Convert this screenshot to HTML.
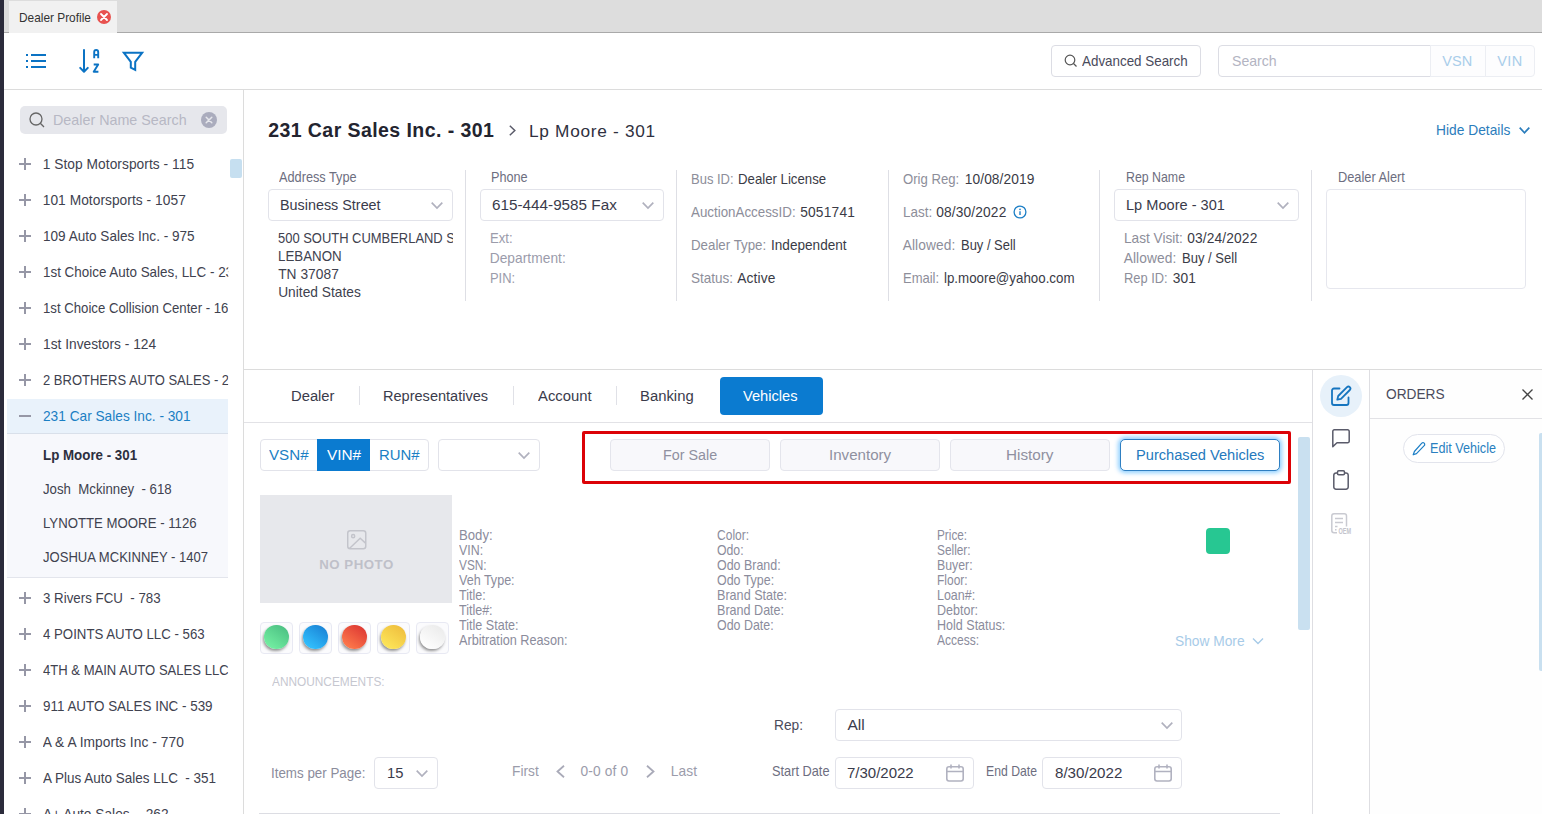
<!DOCTYPE html>
<html><head><meta charset="utf-8"><title>Dealer Profile</title><style>
html,body{margin:0;padding:0;}
body{width:1542px;height:814px;overflow:hidden;position:relative;background:#fff;font-family:"Liberation Sans",sans-serif;}
.t{position:absolute;white-space:pre;line-height:20px;height:20px;transform-origin:0 0;}
.b{position:absolute;box-sizing:border-box;}
svg{position:absolute;overflow:visible;}
</style></head><body>
<div class="b" style="left:0px;top:0px;width:1542px;height:33px;background:#dddddd;border-bottom:1px solid #a9a9a9;"></div>
<div class="b" style="left:9px;top:1px;width:108px;height:32px;background:#f1f1f1;"></div>
<span class="t " style="left:18.70px;top:8.00px;font-size:12.75px;color:#333;transform:scaleX(0.9308);">Dealer Profile</span>
<svg style="left:97px;top:10px" width="14" height="14" viewBox="0 0 14 14"><circle cx="7" cy="7" r="7" fill="#e8524f"/><path d="M4 4L10 10M10 4L4 10" stroke="#fff" stroke-width="1.800" stroke-linecap="round"/></svg>
<div class="b" style="left:0px;top:0px;width:4px;height:814px;background:#2b2b3b;"></div>
<div class="b" style="left:4px;top:89px;width:1538px;height:1px;background:#dcdcdc;"></div>
<svg style="left:25px;top:53px" width="22" height="16" viewBox="0 0 22 16"><g stroke="#0b73c4" stroke-width="2" fill="none"><path d="M1 2h2M6 2h15M1 8h2M6 8h15M1 14h2M6 14h15"/></g></svg>
<svg style="left:78px;top:48px" width="24" height="26" viewBox="0 0 24 26"><g stroke="#0b73c4" stroke-width="2" fill="none" stroke-linecap="round" stroke-linejoin="round"><path d="M6 2v21.500M2.200 19.900L6 23.800 9.800 19.900"/></g><g stroke="#0b73c4" stroke-width="1.900" fill="none" stroke-linejoin="round"><path d="M16.200 10.300V4a2 2 0 0 1 4 0V10.300M16.200 6.900h4"/><path d="M15.700 16.500h4.500l-4.500 7.300h4.700"/></g></svg>
<svg style="left:121px;top:51px" width="24" height="22" viewBox="0 0 24 22"><path d="M2.800 1.700h18.400l-7 9.200v8l-4.400-2.200v-5.800z" stroke="#0b73c4" stroke-width="2" fill="none" stroke-linejoin="miter"/></svg>
<div class="b" style="left:1051px;top:45px;width:150px;height:32px;border:1px solid #dcdde4;border-radius:4px;background:#fff;"></div>
<svg style="left:1064px;top:54px" width="14" height="14" viewBox="0 0 14 14"><circle cx="6" cy="6" r="4.800" stroke="#555" stroke-width="1.2" fill="none"/><path d="M9.500 9.500L12.500 12.500" stroke="#555" stroke-width="1.2"/></svg>
<span class="t " style="left:1081.90px;top:52.00px;font-size:13.75px;color:#4a4b5c;transform:scaleX(0.9738);">Advanced Search</span>
<div class="b" style="left:1218px;top:45px;width:213px;height:32px;border:1px solid #dcdde4;border-radius:4px 0 0 4px;background:#fff;"></div>
<span class="t " style="left:1231.60px;top:51.00px;font-size:14.5px;color:#b3b4c2;transform:scaleX(0.9730);">Search</span>
<div class="b" style="left:1430px;top:45px;width:56px;height:32px;border:1px solid #eceef3;background:#fdfdfe;"></div>
<div class="b" style="left:1485px;top:45px;width:50px;height:32px;border:1px solid #eceef3;border-radius:0 4px 4px 0;background:#fdfdfe;"></div>
<span class="t " style="left:1442.20px;top:51.00px;font-size:14.5px;color:#a9cdea;letter-spacing:0.143px;">VSN</span>
<span class="t " style="left:1497.20px;top:51.00px;font-size:14.5px;color:#a9cdea;letter-spacing:0.464px;">VIN</span>
<div class="b" style="left:243px;top:90px;width:1px;height:724px;background:#dcdcdc;"></div>
<div class="b" style="left:20px;top:106px;width:207px;height:28px;background:#e6e7ec;border-radius:5px;"></div>
<svg style="left:29px;top:112px" width="16" height="16" viewBox="0 0 16 16"><circle cx="7" cy="7" r="6" stroke="#666" stroke-width="1.300" fill="none"/><path d="M11.300 11.300L15 15" stroke="#666" stroke-width="1.300"/></svg>
<span class="t " style="left:52.70px;top:110.00px;font-size:14.5px;color:#b7b8c4;transform:scaleX(0.9868);">Dealer Name Search</span>
<svg style="left:201px;top:112px" width="16" height="16" viewBox="0 0 16 16"><circle cx="8" cy="8" r="8" fill="#aaacbd"/><path d="M5.200 5.200L10.800 10.800M10.800 5.200L5.200 10.800" stroke="#e6e7ec" stroke-width="1.500" stroke-linecap="round"/></svg>
<div class="b" style="left:230px;top:159px;width:12px;height:19px;background:#c6dff0;border-radius:2px;"></div>
<svg style="left:25px;top:164px" width="1" height="1"><path d="M-6 0H6M0 -6V6" stroke="#9697a6" stroke-width="2" fill="none"/></svg>
<span class="t " style="left:42.70px;top:155.00px;font-size:13.75px;color:#40424f;letter-spacing:0.048px;">1 Stop Motorsports - 115</span>
<svg style="left:25px;top:200px" width="1" height="1"><path d="M-6 0H6M0 -6V6" stroke="#9697a6" stroke-width="2" fill="none"/></svg>
<span class="t " style="left:42.70px;top:191.00px;font-size:13.75px;color:#40424f;letter-spacing:0.045px;">101 Motorsports - 1057</span>
<svg style="left:25px;top:236px" width="1" height="1"><path d="M-6 0H6M0 -6V6" stroke="#9697a6" stroke-width="2" fill="none"/></svg>
<span class="t " style="left:42.70px;top:227.00px;font-size:13.75px;color:#40424f;transform:scaleX(0.9867);">109 Auto Sales Inc. - 975</span>
<svg style="left:25px;top:272px" width="1" height="1"><path d="M-6 0H6M0 -6V6" stroke="#9697a6" stroke-width="2" fill="none"/></svg>
<span class="t " style="left:42.70px;top:263.00px;font-size:13.75px;color:#40424f;transform:scaleX(0.9751);overflow:hidden;width:190.03px;">1st Choice Auto Sales, LLC - 2345</span>
<svg style="left:25px;top:308px" width="1" height="1"><path d="M-6 0H6M0 -6V6" stroke="#9697a6" stroke-width="2" fill="none"/></svg>
<span class="t " style="left:42.70px;top:299.00px;font-size:13.75px;color:#40424f;transform:scaleX(0.9590);overflow:hidden;width:193.22px;">1st Choice Collision Center - 1678</span>
<svg style="left:25px;top:344px" width="1" height="1"><path d="M-6 0H6M0 -6V6" stroke="#9697a6" stroke-width="2" fill="none"/></svg>
<span class="t " style="left:42.70px;top:335.00px;font-size:13.75px;color:#40424f;transform:scaleX(0.9999);">1st Investors - 124</span>
<svg style="left:25px;top:380px" width="1" height="1"><path d="M-6 0H6M0 -6V6" stroke="#9697a6" stroke-width="2" fill="none"/></svg>
<span class="t " style="left:42.70px;top:371.00px;font-size:13.75px;color:#40424f;transform:scaleX(0.9452);overflow:hidden;width:196.05px;">2 BROTHERS AUTO SALES - 2222</span>
<div class="b" style="left:7px;top:399px;width:221px;height:35px;background:#e9f2fb;border-bottom:1px solid #d9e0ea;"></div>
<svg style="left:25px;top:416px" width="1" height="1"><path d="M-6 0H6" stroke="#9697a6" stroke-width="2" fill="none"/></svg>
<span class="t " style="left:42.70px;top:407.00px;font-size:13.75px;color:#1b7fc4;transform:scaleX(0.9954);">231 Car Sales Inc. - 301</span>
<div class="b" style="left:7px;top:434px;width:221px;height:144px;background:#f7f8fc;border-bottom:1px solid #e3e5ec;"></div>
<span class="t " style="left:42.70px;top:446.00px;font-size:13.75px;color:#2d2f3e;font-weight:bold;transform:scaleX(0.9698);">Lp Moore - 301</span>
<span class="t " style="left:42.70px;top:480.00px;font-size:13.75px;color:#40424f;transform:scaleX(0.9616);">Josh  Mckinney  - 618</span>
<span class="t " style="left:42.70px;top:514.00px;font-size:13.75px;color:#40424f;transform:scaleX(0.9603);">LYNOTTE MOORE - 1126</span>
<span class="t " style="left:42.70px;top:548.00px;font-size:13.75px;color:#40424f;transform:scaleX(0.9490);">JOSHUA MCKINNEY - 1407</span>
<svg style="left:25px;top:598px" width="1" height="1"><path d="M-6 0H6M0 -6V6" stroke="#9697a6" stroke-width="2" fill="none"/></svg>
<span class="t " style="left:42.70px;top:589.00px;font-size:13.75px;color:#40424f;transform:scaleX(0.9680);overflow:hidden;width:191.43px;">3 Rivers FCU  - 783</span>
<svg style="left:25px;top:634px" width="1" height="1"><path d="M-6 0H6M0 -6V6" stroke="#9697a6" stroke-width="2" fill="none"/></svg>
<span class="t " style="left:42.70px;top:625.00px;font-size:13.75px;color:#40424f;transform:scaleX(0.9627);overflow:hidden;width:192.49px;">4 POINTS AUTO LLC - 563</span>
<svg style="left:25px;top:670px" width="1" height="1"><path d="M-6 0H6M0 -6V6" stroke="#9697a6" stroke-width="2" fill="none"/></svg>
<span class="t " style="left:42.70px;top:661.00px;font-size:13.75px;color:#40424f;transform:scaleX(0.9500);overflow:hidden;width:195.05px;">4TH &amp; MAIN AUTO SALES LLC</span>
<svg style="left:25px;top:706px" width="1" height="1"><path d="M-6 0H6M0 -6V6" stroke="#9697a6" stroke-width="2" fill="none"/></svg>
<span class="t " style="left:42.70px;top:697.00px;font-size:13.75px;color:#40424f;transform:scaleX(0.9761);overflow:hidden;width:189.83px;">911 AUTO SALES INC - 539</span>
<svg style="left:25px;top:742px" width="1" height="1"><path d="M-6 0H6M0 -6V6" stroke="#9697a6" stroke-width="2" fill="none"/></svg>
<span class="t " style="left:42.70px;top:733.00px;font-size:13.75px;color:#40424f;letter-spacing:0.056px;overflow:hidden;width:185.30px;">A &amp; A Imports Inc - 770</span>
<svg style="left:25px;top:778px" width="1" height="1"><path d="M-6 0H6M0 -6V6" stroke="#9697a6" stroke-width="2" fill="none"/></svg>
<span class="t " style="left:42.70px;top:769.00px;font-size:13.75px;color:#40424f;transform:scaleX(0.9803);overflow:hidden;width:189.02px;">A Plus Auto Sales LLC  - 351</span>
<svg style="left:25px;top:814px" width="1" height="1"><path d="M-6 0H6M0 -6V6" stroke="#9697a6" stroke-width="2" fill="none"/></svg>
<span class="t " style="left:42.70px;top:805.00px;font-size:13.75px;color:#40424f;transform:scaleX(0.9988);overflow:hidden;width:185.52px;">A+ Auto Sales  - 262</span>
<span class="t " style="left:268.20px;top:120.00px;font-size:19.5px;color:#23242f;font-weight:bold;letter-spacing:0.430px;">231 Car Sales Inc. - 301</span>
<svg style="left:508.500px;top:124.500px" width="7" height="11" viewBox="0 0 7 11"><path d="M0.800 0.800L5.800 5.500 0.800 10.200" stroke="#5a5b6a" stroke-width="1.500" fill="none"/></svg>
<span class="t " style="left:529.00px;top:121.00px;font-size:17.25px;color:#2f3040;letter-spacing:0.701px;">Lp Moore - 301</span>
<span class="t " style="left:1436.00px;top:121.00px;font-size:13.75px;color:#2b7dbc;letter-spacing:0.025px;">Hide Details</span>
<svg style="left:1518.500px;top:126.500px" width="11" height="7" viewBox="0 0 11 7"><path d="M0.700 0.700L5.500 5.800 10.300 0.700" stroke="#2b7dbc" stroke-width="1.700" fill="none"/></svg>
<span class="t " style="left:279.20px;top:168.00px;font-size:13.75px;color:#6d6e80;transform:scaleX(0.9258);">Address Type</span>
<div class="b" style="left:268px;top:189px;width:185px;height:32px;border:1px solid #e2e3ea;border-radius:4px;background:#fff;"></div>
<span class="t " style="left:280.20px;top:195.00px;font-size:15.5px;color:#3a3b4b;transform:scaleX(0.9267);">Business Street</span>
<svg style="left:431px;top:201.5px" width="12" height="7" viewBox="0 0 12 7"><path d="M0.700 0.700L6 6 11.300 0.700" stroke="#b0b1be" stroke-width="1.700" fill="none"/></svg>
<span class="t " style="left:278.20px;top:229.00px;font-size:13.75px;color:#40424f;transform:scaleX(0.9414);overflow:hidden;width:185.67px;">500 SOUTH CUMBERLAND ST</span>
<span class="t " style="left:278.20px;top:247.00px;font-size:13.75px;color:#40424f;transform:scaleX(0.9678);">LEBANON</span>
<span class="t " style="left:278.20px;top:265.00px;font-size:13.75px;color:#40424f;letter-spacing:0.031px;">TN 37087</span>
<span class="t " style="left:278.20px;top:283.00px;font-size:13.75px;color:#40424f;letter-spacing:0.004px;">United States</span>
<div class="b" style="left:465px;top:170px;width:1px;height:131px;background:#dedfe5;"></div>
<div class="b" style="left:676px;top:170px;width:1px;height:131px;background:#dedfe5;"></div>
<div class="b" style="left:888px;top:170px;width:1px;height:131px;background:#dedfe5;"></div>
<div class="b" style="left:1099px;top:170px;width:1px;height:131px;background:#dedfe5;"></div>
<div class="b" style="left:1311px;top:170px;width:1px;height:131px;background:#dedfe5;"></div>
<span class="t " style="left:491.20px;top:168.00px;font-size:13.75px;color:#6d6e80;transform:scaleX(0.9205);">Phone</span>
<div class="b" style="left:480px;top:189px;width:184px;height:32px;border:1px solid #e2e3ea;border-radius:4px;background:#fff;"></div>
<span class="t " style="left:492.20px;top:195.00px;font-size:15.5px;color:#3a3b4b;transform:scaleX(0.9852);">615-444-9585 Fax</span>
<svg style="left:642px;top:201.5px" width="12" height="7" viewBox="0 0 12 7"><path d="M0.700 0.700L6 6 11.300 0.700" stroke="#b0b1be" stroke-width="1.700" fill="none"/></svg>
<span class="t " style="left:489.70px;top:229.00px;font-size:13.75px;color:#9b9cab;transform:scaleX(0.9541);">Ext:</span>
<span class="t " style="left:489.70px;top:249.00px;font-size:13.75px;color:#9b9cab;letter-spacing:0.044px;">Department:</span>
<span class="t " style="left:489.70px;top:269.00px;font-size:13.75px;color:#9b9cab;transform:scaleX(0.9386);">PIN:</span>
<span class="t " style="left:690.70px;top:170.00px;font-size:13.75px;color:#8d8e9a;transform:scaleX(0.9449);">Bus ID:</span>
<span class="t " style="left:738.20px;top:170.00px;font-size:13.75px;color:#3a3b46;transform:scaleX(0.9605);">Dealer License</span>
<span class="t " style="left:690.70px;top:203.00px;font-size:13.75px;color:#8d8e9a;transform:scaleX(0.9707);">AuctionAccessID:</span>
<span class="t " style="left:800.20px;top:203.00px;font-size:13.75px;color:#3a3b46;letter-spacing:0.195px;">5051741</span>
<span class="t " style="left:690.70px;top:236.00px;font-size:13.75px;color:#8d8e9a;transform:scaleX(0.9677);">Dealer Type:</span>
<span class="t " style="left:771.20px;top:236.00px;font-size:13.75px;color:#3a3b46;transform:scaleX(0.9887);">Independent</span>
<span class="t " style="left:690.70px;top:269.00px;font-size:13.75px;color:#8d8e9a;transform:scaleX(0.9836);">Status:</span>
<span class="t " style="left:737.20px;top:269.00px;font-size:13.75px;color:#3a3b46;letter-spacing:0.131px;">Active</span>
<span class="t " style="left:902.70px;top:170.00px;font-size:13.75px;color:#8d8e9a;transform:scaleX(0.9551);">Orig Reg:</span>
<span class="t " style="left:964.80px;top:170.00px;font-size:13.75px;color:#3a3b46;letter-spacing:0.076px;">10/08/2019</span>
<span class="t " style="left:902.70px;top:203.00px;font-size:13.75px;color:#8d8e9a;transform:scaleX(0.9795);">Last:</span>
<span class="t " style="left:936.20px;top:203.00px;font-size:13.75px;color:#3a3b46;letter-spacing:0.142px;">08/30/2022</span>
<svg style="left:1013px;top:205px" width="14" height="14" viewBox="0 0 14 14"><circle cx="7" cy="7" r="5.900" stroke="#1d7fc6" stroke-width="1.300" fill="none"/><path d="M7 6.300V10" stroke="#1d7fc6" stroke-width="1.400"/><circle cx="7" cy="4.300" r="0.850" fill="#1d7fc6"/></svg>
<span class="t " style="left:902.70px;top:236.00px;font-size:13.75px;color:#8d8e9a;letter-spacing:0.090px;">Allowed:</span>
<span class="t " style="left:960.60px;top:236.00px;font-size:13.75px;color:#3a3b46;transform:scaleX(0.9418);">Buy / Sell</span>
<span class="t " style="left:902.70px;top:269.00px;font-size:13.75px;color:#8d8e9a;transform:scaleX(0.9450);">Email:</span>
<span class="t " style="left:944.20px;top:269.00px;font-size:13.75px;color:#3a3b46;transform:scaleX(0.9687);">lp.moore@yahoo.com</span>
<span class="t " style="left:1125.70px;top:168.00px;font-size:13.75px;color:#6d6e80;transform:scaleX(0.8977);">Rep Name</span>
<div class="b" style="left:1114px;top:189px;width:185px;height:32px;border:1px solid #e2e3ea;border-radius:4px;background:#fff;"></div>
<span class="t " style="left:1126.20px;top:195.00px;font-size:15.5px;color:#3a3b4b;transform:scaleX(0.9409);">Lp Moore - 301</span>
<svg style="left:1277px;top:201.5px" width="12" height="7" viewBox="0 0 12 7"><path d="M0.700 0.700L6 6 11.300 0.700" stroke="#b0b1be" stroke-width="1.700" fill="none"/></svg>
<span class="t " style="left:1123.70px;top:229.00px;font-size:13.75px;color:#8d8e9a;transform:scaleX(0.9923);">Last Visit:</span>
<span class="t " style="left:1187.20px;top:229.00px;font-size:13.75px;color:#3a3b46;letter-spacing:0.142px;">03/24/2022</span>
<span class="t " style="left:1123.70px;top:249.00px;font-size:13.75px;color:#8d8e9a;letter-spacing:0.090px;">Allowed:</span>
<span class="t " style="left:1181.80px;top:249.00px;font-size:13.75px;color:#3a3b46;transform:scaleX(0.9487);">Buy / Sell</span>
<span class="t " style="left:1123.70px;top:269.00px;font-size:13.75px;color:#8d8e9a;transform:scaleX(0.9353);">Rep ID:</span>
<span class="t " style="left:1172.70px;top:269.00px;font-size:13.75px;color:#3a3b46;letter-spacing:0.079px;">301</span>
<span class="t " style="left:1337.70px;top:168.00px;font-size:13.75px;color:#6d6e80;transform:scaleX(0.9312);">Dealer Alert</span>
<div class="b" style="left:1326px;top:189px;width:200px;height:100px;border:1px solid #e6e7ee;border-radius:4px;background:#fff;"></div>
<div class="b" style="left:244px;top:369px;width:1298px;height:1px;background:#dcdcdc;"></div>
<div class="b" style="left:244px;top:422px;width:1069px;height:1px;background:#e2e2e6;"></div>
<span class="t " style="left:291.20px;top:386.00px;font-size:15.5px;color:#3a3b4b;transform:scaleX(0.9527);">Dealer</span>
<span class="t " style="left:383.20px;top:386.00px;font-size:15.5px;color:#3a3b4b;transform:scaleX(0.9384);">Representatives</span>
<span class="t " style="left:537.70px;top:386.00px;font-size:15.5px;color:#3a3b4b;transform:scaleX(0.9570);">Account</span>
<span class="t " style="left:640.20px;top:386.00px;font-size:15.5px;color:#3a3b4b;transform:scaleX(0.9587);">Banking</span>
<div class="b" style="left:359px;top:386px;width:1px;height:19px;background:#e0e1e7;"></div>
<div class="b" style="left:513px;top:386px;width:1px;height:19px;background:#e0e1e7;"></div>
<div class="b" style="left:616px;top:386px;width:1px;height:19px;background:#e0e1e7;"></div>
<div class="b" style="left:720px;top:377px;width:103px;height:38px;background:#0b7bd0;border-radius:4px;"></div>
<span class="t " style="left:743.20px;top:386.00px;font-size:15.5px;color:#fff;transform:scaleX(0.9458);">Vehicles</span>
<div class="b" style="left:260px;top:439px;width:169px;height:32px;border:1px solid #e2e3ea;border-radius:4px;background:#fff;"></div>
<div class="b" style="left:317px;top:439px;width:53px;height:32px;background:#0b7bd0;"></div>
<span class="t " style="left:269.20px;top:445.00px;font-size:15.5px;color:#1b7fc4;transform:scaleX(0.9780);">VSN#</span>
<span class="t " style="left:326.70px;top:445.00px;font-size:15.5px;color:#fff;transform:scaleX(0.9896);">VIN#</span>
<span class="t " style="left:379.20px;top:445.00px;font-size:15.5px;color:#1b7fc4;transform:scaleX(0.9621);">RUN#</span>
<div class="b" style="left:438px;top:439px;width:102px;height:32px;border:1px solid #e2e3ea;border-radius:4px;background:#fff;"></div>
<svg style="left:518px;top:451.5px" width="12" height="7" viewBox="0 0 12 7"><path d="M0.700 0.700L6 6 11.300 0.700" stroke="#b0b1be" stroke-width="1.700" fill="none"/></svg>
<div class="b" style="left:582px;top:431px;width:709px;height:53px;border:3.500px solid #dc0207;border-radius:2px;"></div>
<div class="b" style="left:610px;top:439px;width:160px;height:32px;border:1px solid #e4e5ec;border-radius:4px;background:#f8f8fb;"></div>
<span class="t " style="left:663.20px;top:445.00px;font-size:15.5px;color:#8f90a0;transform:scaleX(0.9235);">For Sale</span>
<div class="b" style="left:780px;top:439px;width:160px;height:32px;border:1px solid #e4e5ec;border-radius:4px;background:#f8f8fb;"></div>
<span class="t " style="left:829.20px;top:445.00px;font-size:15.5px;color:#8f90a0;transform:scaleX(0.9740);">Inventory</span>
<div class="b" style="left:950px;top:439px;width:160px;height:32px;border:1px solid #e4e5ec;border-radius:4px;background:#f8f8fb;"></div>
<span class="t " style="left:1006.20px;top:445.00px;font-size:15.5px;color:#8f90a0;transform:scaleX(0.9850);">History</span>
<div class="b" style="left:1120px;top:439px;width:160px;height:32px;border:1px solid #2e7fc2;border-radius:5px;background:#fff;box-shadow:0 0 4px 2px rgba(125,200,255,.85);"></div>
<span class="t " style="left:1135.60px;top:445.00px;font-size:15.5px;color:#2579bd;transform:scaleX(0.9431);">Purchased Vehicles</span>
<div class="b" style="left:1298px;top:437px;width:12px;height:193px;background:#c9e0f0;border-radius:2px;"></div>
<div class="b" style="left:260px;top:495px;width:192px;height:108px;background:#e7e8ec;"></div>
<svg style="left:346.500px;top:530.300px" width="19.500" height="19.500" viewBox="0 0 20 20"><g stroke="#c3c4cb" stroke-width="1.500" fill="none"><rect x="0.750" y="0.750" width="18.500" height="18.500" rx="2.500"/><circle cx="6.300" cy="6.300" r="1.600"/><path d="M2.500 19L13.500 8.500 19 13.500"/></g></svg>
<span class="t " style="left:319.20px;top:555.00px;font-size:13.25px;color:#bfc0c9;font-weight:bold;letter-spacing:0.524px;">NO PHOTO</span>
<div class="b" style="left:260px;top:622px;width:33px;height:32px;border:1px solid #e8e9f3;border-radius:4px;background:#fbfbfd;"></div>
<div class="b" style="left:264.2px;top:624.7px;width:24.7px;height:24.7px;border-radius:50%;background:linear-gradient(215deg,#4cc083 10%,#74f0a3 90%);box-shadow:-1px 2px 3px rgba(0,0,0,.42);"></div>
<div class="b" style="left:299px;top:622px;width:33px;height:32px;border:1px solid #e8e9f3;border-radius:4px;background:#fbfbfd;"></div>
<div class="b" style="left:303.2px;top:624.7px;width:24.7px;height:24.7px;border-radius:50%;background:linear-gradient(215deg,#1a83d6 10%,#33c3ff 90%);box-shadow:-1px 2px 3px rgba(0,0,0,.42);"></div>
<div class="b" style="left:338px;top:622px;width:33px;height:32px;border:1px solid #e8e9f3;border-radius:4px;background:#fbfbfd;"></div>
<div class="b" style="left:342.2px;top:624.7px;width:24.7px;height:24.7px;border-radius:50%;background:linear-gradient(215deg,#dd3833 10%,#ff7c4c 90%);box-shadow:-1px 2px 3px rgba(0,0,0,.42);"></div>
<div class="b" style="left:377px;top:622px;width:33px;height:32px;border:1px solid #e8e9f3;border-radius:4px;background:#fbfbfd;"></div>
<div class="b" style="left:381.2px;top:624.7px;width:24.7px;height:24.7px;border-radius:50%;background:linear-gradient(215deg,#efbe3e 10%,#fde75a 90%);box-shadow:-1px 2px 3px rgba(0,0,0,.42);"></div>
<div class="b" style="left:416px;top:622px;width:33px;height:32px;border:1px solid #e8e9f3;border-radius:4px;background:#fbfbfd;"></div>
<div class="b" style="left:420.2px;top:624.7px;width:24.7px;height:24.7px;border-radius:50%;background:linear-gradient(215deg,#ebebeb 10%,#ffffff 90%);box-shadow:-1px 2px 3px rgba(0,0,0,.42);"></div>
<span class="t " style="left:459.20px;top:526.00px;font-size:13.75px;color:#8b8c9c;transform:scaleX(0.9556);">Body:</span>
<span class="t " style="left:459.20px;top:541.00px;font-size:13.75px;color:#8b8c9c;transform:scaleX(0.9012);">VIN:</span>
<span class="t " style="left:459.20px;top:556.00px;font-size:13.75px;color:#8b8c9c;transform:scaleX(0.8600);">VSN:</span>
<span class="t " style="left:459.20px;top:571.00px;font-size:13.75px;color:#8b8c9c;transform:scaleX(0.9128);">Veh Type:</span>
<span class="t " style="left:459.20px;top:586.00px;font-size:13.75px;color:#8b8c9c;transform:scaleX(0.9083);">Title:</span>
<span class="t " style="left:459.20px;top:601.00px;font-size:13.75px;color:#8b8c9c;transform:scaleX(0.9097);">Title#:</span>
<span class="t " style="left:459.20px;top:616.00px;font-size:13.75px;color:#8b8c9c;transform:scaleX(0.9139);">Title State:</span>
<span class="t " style="left:459.20px;top:631.00px;font-size:13.75px;color:#8b8c9c;transform:scaleX(0.9227);">Arbitration Reason:</span>
<span class="t " style="left:716.70px;top:526.00px;font-size:13.75px;color:#8b8c9c;transform:scaleX(0.8752);">Color:</span>
<span class="t " style="left:716.70px;top:541.00px;font-size:13.75px;color:#8b8c9c;transform:scaleX(0.8923);">Odo:</span>
<span class="t " style="left:716.70px;top:556.00px;font-size:13.75px;color:#8b8c9c;transform:scaleX(0.9044);">Odo Brand:</span>
<span class="t " style="left:716.70px;top:571.00px;font-size:13.75px;color:#8b8c9c;transform:scaleX(0.9036);">Odo Type:</span>
<span class="t " style="left:716.70px;top:586.00px;font-size:13.75px;color:#8b8c9c;transform:scaleX(0.9171);">Brand State:</span>
<span class="t " style="left:716.70px;top:601.00px;font-size:13.75px;color:#8b8c9c;transform:scaleX(0.9145);">Brand Date:</span>
<span class="t " style="left:716.70px;top:616.00px;font-size:13.75px;color:#8b8c9c;transform:scaleX(0.9031);">Odo Date:</span>
<span class="t " style="left:936.70px;top:526.00px;font-size:13.75px;color:#8b8c9c;transform:scaleX(0.8564);">Price:</span>
<span class="t " style="left:936.70px;top:541.00px;font-size:13.75px;color:#8b8c9c;transform:scaleX(0.8621);">Seller:</span>
<span class="t " style="left:936.70px;top:556.00px;font-size:13.75px;color:#8b8c9c;transform:scaleX(0.8958);">Buyer:</span>
<span class="t " style="left:936.70px;top:571.00px;font-size:13.75px;color:#8b8c9c;transform:scaleX(0.8706);">Floor:</span>
<span class="t " style="left:936.70px;top:586.00px;font-size:13.75px;color:#8b8c9c;transform:scaleX(0.9059);">Loan#:</span>
<span class="t " style="left:936.70px;top:601.00px;font-size:13.75px;color:#8b8c9c;transform:scaleX(0.9115);">Debtor:</span>
<span class="t " style="left:936.70px;top:616.00px;font-size:13.75px;color:#8b8c9c;transform:scaleX(0.9119);">Hold Status:</span>
<span class="t " style="left:936.70px;top:631.00px;font-size:13.75px;color:#8b8c9c;transform:scaleX(0.8746);">Access:</span>
<div class="b" style="left:1206px;top:528px;width:24px;height:26px;background:#27c792;border-radius:4px;"></div>
<span class="t " style="left:1175.20px;top:631.00px;font-size:14.25px;color:#a7cbe8;transform:scaleX(0.9657);">Show More</span>
<svg style="left:1252px;top:637px" width="12" height="8" viewBox="0 0 12 8"><path d="M1 1.500L6 6.500 11 1.500" stroke="#a7cbe8" stroke-width="1.400" fill="none"/></svg>
<span class="t " style="left:271.70px;top:672.00px;font-size:13.25px;color:#c6c7d0;transform:scaleX(0.8945);">ANNOUNCEMENTS:</span>
<span class="t " style="left:773.80px;top:715.00px;font-size:15.5px;color:#4a4b5c;transform:scaleX(0.8857);">Rep:</span>
<div class="b" style="left:835px;top:709px;width:347px;height:32px;border:1px solid #e2e3ea;border-radius:4px;background:#fff;"></div>
<span class="t " style="left:847.40px;top:715.00px;font-size:15.5px;color:#3a3b4b;letter-spacing:0.037px;">All</span>
<svg style="left:1160.5px;top:722px" width="12" height="7" viewBox="0 0 12 7"><path d="M0.700 0.700L6 6 11.300 0.700" stroke="#b0b1be" stroke-width="1.700" fill="none"/></svg>
<span class="t " style="left:271.20px;top:764.00px;font-size:13.75px;color:#8b8c9c;transform:scaleX(0.9726);">Items per Page:</span>
<div class="b" style="left:374px;top:757px;width:64px;height:32px;border:1px solid #e2e3ea;border-radius:4px;background:#fff;"></div>
<span class="t " style="left:387.20px;top:763.00px;font-size:15.5px;color:#3a3b4b;transform:scaleX(0.9512);">15</span>
<svg style="left:416px;top:770px" width="12" height="7" viewBox="0 0 12 7"><path d="M0.700 0.700L6 6 11.300 0.700" stroke="#b0b1be" stroke-width="1.700" fill="none"/></svg>
<span class="t " style="left:511.50px;top:762.00px;font-size:13.75px;color:#9b9cab;transform:scaleX(0.9989);">First</span>
<svg style="left:555.500px;top:764.500px" width="9" height="13" viewBox="0 0 9 13"><path d="M8 0.800L1.500 6.500 8 12.200" stroke="#a9aab8" stroke-width="1.800" fill="none"/></svg>
<span class="t " style="left:580.50px;top:762.00px;font-size:13.75px;color:#9b9cab;letter-spacing:0.139px;">0-0 of 0</span>
<svg style="left:645.500px;top:764.500px" width="9" height="13" viewBox="0 0 9 13"><path d="M1 0.800L7.500 6.500 1 12.200" stroke="#a9aab8" stroke-width="1.800" fill="none"/></svg>
<span class="t " style="left:670.70px;top:762.00px;font-size:13.75px;color:#9b9cab;letter-spacing:0.170px;">Last</span>
<span class="t " style="left:771.80px;top:762.00px;font-size:13.75px;color:#6d6e80;transform:scaleX(0.9289);">Start Date</span>
<div class="b" style="left:835px;top:757px;width:139px;height:32px;border:1px solid #e2e3ea;border-radius:4px;background:#fff;"></div>
<span class="t " style="left:847.40px;top:763.00px;font-size:15.5px;color:#3a3b4b;transform:scaleX(0.9673);">7/30/2022</span>
<span class="t " style="left:985.80px;top:762.00px;font-size:13.75px;color:#6d6e80;transform:scaleX(0.8896);">End Date</span>
<div class="b" style="left:1042px;top:757px;width:140px;height:32px;border:1px solid #e2e3ea;border-radius:4px;background:#fff;"></div>
<span class="t " style="left:1055.10px;top:763.00px;font-size:15.5px;color:#3a3b4b;transform:scaleX(0.9760);">8/30/2022</span>
<svg style="left:945.7px;top:764px" width="18" height="18" viewBox="0 0 18 18"><g stroke="#b1b2c0" stroke-width="1.600" fill="none"><rect x="0.800" y="2.800" width="16.400" height="14.200" rx="2.200"/><path d="M0.700 7.500H17.300M5 0.500V4.500M13 0.500V4.500"/></g></svg>
<svg style="left:1153.7px;top:764px" width="18" height="18" viewBox="0 0 18 18"><g stroke="#b1b2c0" stroke-width="1.600" fill="none"><rect x="0.800" y="2.800" width="16.400" height="14.200" rx="2.200"/><path d="M0.700 7.500H17.300M5 0.500V4.500M13 0.500V4.500"/></g></svg>
<div class="b" style="left:259px;top:813px;width:1021px;height:1px;background:#dcdde3;"></div>
<div class="b" style="left:1312px;top:370px;width:1px;height:444px;background:#dedee2;"></div>
<div class="b" style="left:1369px;top:370px;width:1px;height:444px;background:#dedee2;"></div>
<div class="b" style="left:1370px;top:370px;width:172px;height:444px;background:#fefefe;"></div>
<div class="b" style="left:1370px;top:418px;width:172px;height:1px;background:#e2e2e6;"></div>
<div class="b" style="left:1320px;top:375px;width:42px;height:42px;background:#e7f1fa;border-radius:50%;"></div>
<svg style="left:1330px;top:385px" width="22" height="22" viewBox="0 0 22 22"><g stroke="#1675bf" stroke-width="1.800" fill="none" stroke-linejoin="round" stroke-linecap="round"><path d="M9.500 3.500H4a2 2 0 0 0-2 2V18a2 2 0 0 0 2 2h12.500a2 2 0 0 0 2-2v-5.500"/><path d="M17 2.200a1.900 1.900 0 0 1 2.800 2.800L11 13.800l-3.700 0.900 0.900-3.700z"/></g></svg>
<svg style="left:1332px;top:428.800px" width="18" height="18.700" viewBox="0 0 18 18" preserveAspectRatio="none"><path d="M2.300 0.800h13.400a1.500 1.500 0 0 1 1.500 1.500v9.400a1.500 1.500 0 0 1-1.500 1.500H5L0.800 17V2.300a1.500 1.500 0 0 1 1.500-1.500z" stroke="#5a5b6a" stroke-width="1.500" fill="none" stroke-linejoin="round"/></svg>
<svg style="left:1333px;top:470px" width="16" height="20" viewBox="0 0 16 20"><g stroke="#5a5b6a" stroke-width="1.500" fill="none" stroke-linejoin="round"><path d="M4.500 3H3a2.200 2.200 0 0 0-2.200 2.200V17A2.200 2.200 0 0 0 3 19.200h10A2.200 2.200 0 0 0 15.200 17V5.200A2.200 2.200 0 0 0 13 3h-1.500"/><rect x="4.500" y="0.800" width="7" height="4" rx="1.200"/></g></svg>
<svg style="left:1331px;top:512.500px" width="21" height="21" viewBox="0 0 21 21"><g stroke="#c9cad1" stroke-width="1.500" fill="none"><path d="M6 19.700H3a2.200 2.200 0 0 1-2.200-2.200V3A2.200 2.200 0 0 1 3 0.800h10.300A2.200 2.200 0 0 1 15.500 3v10.500"/><path d="M4 5.500h8M4 9.500h8M4 13.500h2.500M4 16.800h1.500"/></g><text x="7.500" y="20.500" font-family="Liberation Sans" font-size="8.500" font-weight="bold" fill="#c3c4cc" textLength="12.500" lengthAdjust="spacingAndGlyphs">OEM</text></svg>
<span class="t " style="left:1385.70px;top:384.00px;font-size:14.5px;color:#4a4b5c;transform:scaleX(0.9446);">ORDERS</span>
<svg style="left:1521.5px;top:388.700px" width="11" height="11" viewBox="0 0 11 11"><path d="M0.500 0.500L10.500 10.500M10.500 0.500L0.500 10.500" stroke="#444" stroke-width="1.300"/></svg>
<div class="b" style="left:1403px;top:434px;width:102px;height:29px;border:1px solid #e2e4ec;border-radius:15px;background:#fff;"></div>
<svg style="left:1412px;top:442px" width="14" height="14" viewBox="0 0 14 14"><path d="M9.800 1.200a1.500 1.500 0 0 1 2.400 2.400L4.500 11.600 1.200 12.800 2.400 9.500z" stroke="#1d7fc6" stroke-width="1.200" fill="none" stroke-linejoin="round"/></svg>
<span class="t " style="left:1429.70px;top:439.00px;font-size:13.75px;color:#2a7fc0;transform:scaleX(0.9185);">Edit Vehicle</span>
<div class="b" style="left:1539px;top:433px;width:3px;height:238px;background:#c9e0f0;border-radius:2px 0 0 2px;"></div>
</body></html>
